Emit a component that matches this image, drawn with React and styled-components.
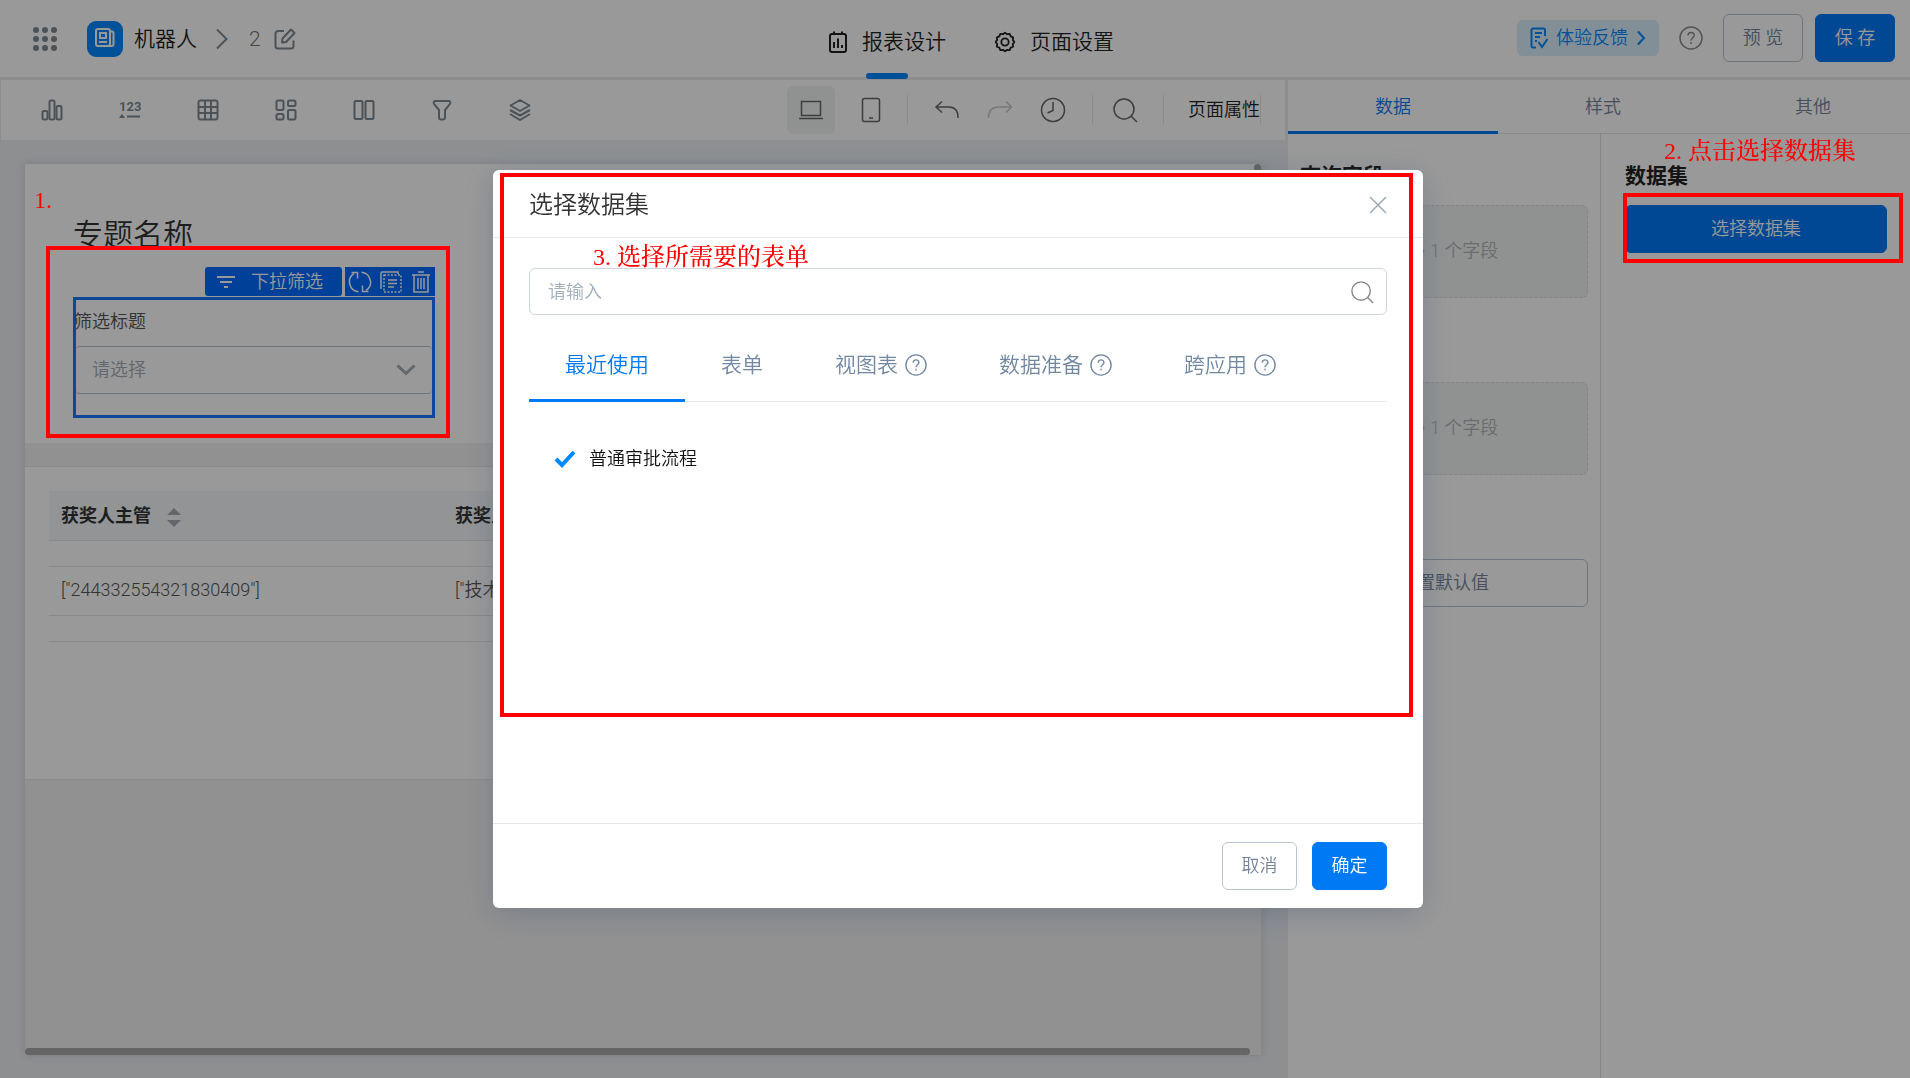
import styled, { createGlobalStyle } from "styled-components";

const App = () => {
  return (
    <>
      <GlobalStyle />
      <Page>
        <Header>
          <HeaderLeft>
            <IconButton aria-label="应用列表">
              <AppsIcon />
            </IconButton>
            <Logo>
              <NewsIcon />
            </Logo>
            <AppName href="#app">机器人</AppName>
            <ChevronRightIcon />
            <PageName>2</PageName>
            <IconButton aria-label="编辑名称">
              <EditIcon />
            </IconButton>
          </HeaderLeft>
          <HeaderNav>
            <NavItem href="#design" $active>
              <ReportIcon />
              报表设计
            </NavItem>
            <NavItem href="#settings">
              <GearIcon />
              页面设置
            </NavItem>
          </HeaderNav>
          <HeaderRight>
            <Feedback href="#feedback">
              <FeedbackIcon />
              体验反馈
              <SmallChevronIcon />
            </Feedback>
            <HelpButton aria-label="帮助">
              <HelpIcon size={24} />
            </HelpButton>
            <Actions>
              <Button>预 览</Button>
              <Button $primary>保 存</Button>
            </Actions>
          </HeaderRight>
        </Header>

        <Body>
          <Workspace>
            <Toolbar>
              <Widgets>
                {widgets.map(({ label, Icon }) => (
                  <WidgetButton key={label} aria-label={label}>
                    <Icon />
                  </WidgetButton>
                ))}
              </Widgets>
              <Tools>
                <ToolButton aria-label="电脑端" $active>
                  <LaptopIcon />
                </ToolButton>
                <ToolButton aria-label="手机端">
                  <PhoneIcon />
                </ToolButton>
                <Divider />
                <History>
                  <IconButton aria-label="撤销">
                    <UndoIcon />
                  </IconButton>
                  <IconButton aria-label="重做" disabled>
                    <RedoIcon />
                  </IconButton>
                  <IconButton aria-label="历史">
                    <ClockIcon />
                  </IconButton>
                </History>
                <Divider />
                <SearchButton aria-label="搜索">
                  <SearchIcon size={26} />
                </SearchButton>
                <Divider />
                <PageProps>页面属性</PageProps>
                <Divider />
              </Tools>
            </Toolbar>

            <Canvas>
              <Paper>
                <FilterSection>
                  <PaperTitle>专题名称</PaperTitle>
                  <Selected>
                    <SelectedBar>
                      <SelectedTag>
                        <FilterLinesIcon />
                        下拉筛选
                      </SelectedTag>
                      <SelectedTools>
                        <IconButton aria-label="切换">
                          <RefreshIcon />
                        </IconButton>
                        <IconButton aria-label="复制">
                          <CopyIcon />
                        </IconButton>
                        <IconButton aria-label="删除">
                          <TrashIcon />
                        </IconButton>
                      </SelectedTools>
                    </SelectedBar>
                    <FilterBox>
                      <FilterLabel htmlFor="filter">筛选标题</FilterLabel>
                      <SelectWrap>
                        <Select id="filter">
                          <option>请选择</option>
                        </Select>
                        <ChevronDownIcon />
                      </SelectWrap>
                    </FilterBox>
                  </Selected>
                </FilterSection>
                <TableSection>
                  <Table>
                    <colgroup>
                      <col width="394" />
                      <col width="394" />
                      <col />
                    </colgroup>
                    <thead>
                      <tr>
                        <Th>
                          获奖人主管
                          <SortIcon />
                        </Th>
                        <Th>获奖人部门</Th>
                        <Th />
                      </tr>
                    </thead>
                    <tbody>
                      <SpacerRow>
                        <td colSpan={3} />
                      </SpacerRow>
                      <tr>
                        <Td>["244332554321830409"]</Td>
                        <Td>["技术部"]</Td>
                        <Td />
                      </tr>
                      <SpacerRow>
                        <td colSpan={3} />
                      </SpacerRow>
                    </tbody>
                  </Table>
                </TableSection>
                <ScrollThumbY />
                <ScrollTrackX>
                  <ScrollThumbX />
                </ScrollTrackX>
              </Paper>
            </Canvas>
          </Workspace>

          <SidePanel>
            <PanelTabs>
              <PanelTab $active>数据</PanelTab>
              <PanelTab>样式</PanelTab>
              <PanelTab>其他</PanelTab>
            </PanelTabs>
            <PanelColumns>
              <FieldColumn>
                <PanelTitle>查询字段</PanelTitle>
                <DropZone>最多 1 个字段</DropZone>
                <PanelTitle $spaced>显示字段</PanelTitle>
                <DropZone>最多 1 个字段</DropZone>
                <PanelTitle $spaced>默认值</PanelTitle>
                <Button>设置默认值</Button>
              </FieldColumn>
              <DatasetColumn>
                <PanelTitle>数据集</PanelTitle>
                <Button $primary>选择数据集</Button>
              </DatasetColumn>
            </PanelColumns>
          </SidePanel>
        </Body>
      </Page>

      <Overlay>
        <Dialog role="dialog" aria-labelledby="dialog-title">
          <DialogHeader>
            <DialogTitle id="dialog-title">选择数据集</DialogTitle>
            <IconButton aria-label="关闭">
              <CloseIcon />
            </IconButton>
          </DialogHeader>
          <DialogBody>
            <SearchBox>
              <SearchInput placeholder="请输入" aria-label="搜索数据集" />
              <SearchIcon size={24} />
            </SearchBox>
            <DialogTabs>
              {tabs.map((tab, i) => (
                <DialogTab key={tab.name} $active={i === 0}>
                  {tab.name}
                  {tab.help && <HelpIcon size={22} />}
                </DialogTab>
              ))}
            </DialogTabs>
            <FormItem>
              <CheckIcon />
              普通审批流程
            </FormItem>
          </DialogBody>
          <DialogFooter>
            <Button $small>取消</Button>
            <Button $small $primary>
              确定
            </Button>
          </DialogFooter>
          <DialogMark />
          <DialogNote>3. 选择所需要的表单</DialogNote>
        </Dialog>
        <FilterMark />
        <FilterNote>1.</FilterNote>
        <DatasetMark />
        <DatasetNote>2. 点击选择数据集</DatasetNote>
      </Overlay>
    </>
  );
};

// icons

const Svg = ({ w = 24, h = w, box, children, sw = 1.5, ...rest }) => (
  <svg
    width={w}
    height={h}
    viewBox={box || `0 0 ${w} ${h}`}
    fill="none"
    stroke="currentColor"
    strokeWidth={sw}
    aria-hidden="true"
    {...rest}
  >
    {children}
  </svg>
);

const AppsIcon = () => (
  <Svg w={26} fill="currentColor" stroke="none">
    {[4, 13, 22].map((y) =>
      [4, 13, 22].map((x) => <circle key={`${x}-${y}`} cx={x} cy={y} r="3" />)
    )}
  </Svg>
);

const NewsIcon = () => (
  <Svg w={22} sw={2}>
    <rect x="2" y="1" width="14" height="17" rx="2" />
    <path d="M16 3.500h2a1.500 1.500 0 0 1 1.500 1.500v11a2 2 0 0 1-2 2H14" />
    <rect x="6" y="5" width="6" height="5" />
    <path d="M5 14h8" />
  </Svg>
);

const ChevronRightIcon = () => (
  <Svg w={14} h={22} sw={2}>
    <path d="M2 1.500 11.500 11 2 20.500" />
  </Svg>
);

const EditIcon = () => (
  <Svg w={22} sw={2}>
    <path d="M10 3H4a2.500 2.500 0 0 0-2.500 2.500V18A2.500 2.500 0 0 0 4 20.500h13a2.500 2.500 0 0 0 2.500-2.500v-5.500" />
    <path d="m17 1.500 3.500 3.500-8.500 9-4 .5.5-4z" strokeLinejoin="round" />
  </Svg>
);

const ReportIcon = () => (
  <Svg w={20} h={24} sw={2}>
    <rect x="2" y="4" width="16" height="18" rx="2" />
    <path d="M6 1.500V5M14 1.500V5" />
    <path d="M6 12v6M10 8.500V18M14 15v3" />
  </Svg>
);

const GearIcon = () => (
  <Svg w={22} box="0 0 24 24" sw={2} strokeLinejoin="round">
    <path d="M9.700 3.500 12 1.800l2.300 1.700 2.800-.4 1.100 2.700 2.700 1.100-.4 2.800L22.200 12l-1.700 2.300.4 2.800-2.700 1.100-1.100 2.700-2.800-.4L12 22.200l-2.300-1.700-2.800.4-1.100-2.700-2.700-1.100.4-2.800L1.800 12l1.700-2.300-.4-2.800 2.700-1.100 1.100-2.700z" />
    <circle cx="12" cy="12" r="4" />
  </Svg>
);

const FeedbackIcon = () => (
  <Svg w={18} h={22} sw={2}>
    <path d="M6 20.500H3A1.500 1.500 0 0 1 1.500 19V3A1.500 1.500 0 0 1 3 1.500h10.500A1.500 1.500 0 0 1 15 3v6" />
    <path d="M5 6h7M5 10h5M5 14h2M8.500 15l3.500 5 5.500-8" />
  </Svg>
);

const SmallChevronIcon = () => (
  <Svg w={10} h={16} sw={2}>
    <path d="m2 1.500 6 6.500-6 6.500" />
  </Svg>
);

const HelpIcon = ({ size }) => (
  <Svg w={size} box="0 0 24 24">
    <circle cx="12" cy="12" r="11" />
    <path d="M9 9.500c0-4 6.200-4 6.200-.2 0 2.400-3.200 2.500-3.200 5.200M12 16v2" />
  </Svg>
);

const BarsIcon = () => (
  <Svg w={22} h={22} sw={2}>
    <rect x="1.500" y="12" width="5" height="8.500" rx="1.500" />
    <rect x="8.500" y="1.500" width="5" height="19" rx="1.500" />
    <rect x="15.500" y="7" width="5" height="13.500" rx="1.500" />
  </Svg>
);

const NumberIcon = () => (
  <Svg w={24} h={20} stroke="none" fill="currentColor">
    <text x="1" y="11" fontSize="13" fontWeight="700" fontFamily="Roboto">
      123
    </text>
    <path d="m1 18 3-4 3 4zM9 15.500h13v2H9z" />
  </Svg>
);

const GridIcon = () => (
  <Svg w={22} sw={2}>
    <rect x="1.500" y="1.500" width="19" height="19" rx="2" />
    <path d="M8 2v18M14 2v18M2 8h18M2 14h18" />
  </Svg>
);

const BlocksIcon = () => (
  <Svg w={22} sw={2}>
    <rect x="1.500" y="1.500" width="7" height="9.500" rx="1.500" />
    <rect x="13" y="1.500" width="7.500" height="5.500" rx="1.500" />
    <rect x="1.500" y="15" width="7" height="5.500" rx="1.500" />
    <rect x="13" y="11" width="7.500" height="9.500" rx="1.500" />
  </Svg>
);

const ColumnsIcon = () => (
  <Svg w={22} sw={2}>
    <rect x="1.500" y="2" width="8" height="18" rx="1.500" />
    <rect x="12.500" y="2" width="8" height="18" rx="1.500" />
  </Svg>
);

const FunnelIcon = () => (
  <Svg w={20} h={22} sw={2} strokeLinejoin="round">
    <path d="M3 2h14c1.500 0 1.500 2 1 2.800L13 11v7.500c0 1-1 2-2 2H9c-1 0-2-1-2-2V11L2 4.800C1.500 4 1.500 2 3 2z" />
  </Svg>
);

const LayersIcon = () => (
  <Svg w={24} sw={2} strokeLinejoin="round">
    <path d="m12 2 9.500 5.500L12 13 2.500 7.500zM2 12l10 5.500L22 12M2 16l10 6 10-6" />
  </Svg>
);

const LaptopIcon = () => (
  <Svg w={26} h={22}>
    <path d="M3.500 2.500h19v14h-19zM1 19.500h24" />
  </Svg>
);

const PhoneIcon = () => (
  <Svg w={20} h={26}>
    <rect x="1.500" y="1.500" width="17" height="23" rx="2" />
    <path d="M8 21h4" />
  </Svg>
);

const UndoIcon = () => (
  <Svg w={26} h={20}>
    <path d="M8 1.500 2 7l6 5.500M2 7h13c6 0 9 4 9 11" />
  </Svg>
);

const RedoIcon = () => (
  <Svg w={26} h={20}>
    <path d="m19 1.500 5.500 5.500-5.500 5.500M24.500 7h-13C5 7 1.500 11 1.500 18" />
  </Svg>
);

const ClockIcon = () => (
  <Svg w={26}>
    <circle cx="13" cy="13" r="11.500" />
    <path d="M13 5v8.500L7.500 16" />
  </Svg>
);

const SearchIcon = ({ size }) => (
  <Svg w={size} box="0 0 26 26">
    <circle cx="12" cy="12" r="10" />
    <path d="m19 19 6 6" />
  </Svg>
);

const FilterLinesIcon = () => (
  <Svg w={18} h={16} sw={2}>
    <path d="M0 3h18M3 8h12M7 13h4" />
  </Svg>
);

const RefreshIcon = () => (
  <Svg w={24}>
    <path d="M10.500 21.800A10 10 0 0 1 6 3.500M13.500 2.200A10 10 0 0 1 18 20.500" />
    <path d="M3.500 2.500h6v6M20.500 21.500h-6v-6" />
  </Svg>
);

const CopyIcon = () => (
  <Svg w={24}>
    <path d="M2 19V3a1 1 0 0 1 1-1h16v2" />
    <rect x="5" y="5" width="17" height="17" strokeDasharray="2 1.500" />
    <path d="M9 10h9M9 13.500h9M9 17h6" />
  </Svg>
);

const TrashIcon = () => (
  <Svg w={22} h={24}>
    <path d="M2 5h18M8 2h6M4 5v17h14V5M8 8v11M11 8v11M14 8v11" />
  </Svg>
);

const ChevronDownIcon = () => (
  <Svg w={20} h={12} sw={3}>
    <path d="m1.500 1.500 8.500 8 8.500-8" />
  </Svg>
);

const SortIcon = () => (
  <Svg w={14} h={20} fill="#a3acb8" stroke="none">
    <path d="m0 7 7-7 7 7zM0 12l7 7 7-7z" />
  </Svg>
);

const CloseIcon = () => (
  <Svg w={18}>
    <path d="m1 1 16 16M17 1 1 17" />
  </Svg>
);

const CheckIcon = () => (
  <Svg w={22} h={18} sw={4}>
    <path d="m2 9 6 6L20 2" />
  </Svg>
);

const widgets = [
  { label: "图表", Icon: BarsIcon },
  { label: "指标", Icon: NumberIcon },
  { label: "表格", Icon: GridIcon },
  { label: "组件", Icon: BlocksIcon },
  { label: "布局", Icon: ColumnsIcon },
  { label: "筛选", Icon: FunnelIcon },
  { label: "图层", Icon: LayersIcon },
];

const tabs = [
  { name: "最近使用" },
  { name: "表单" },
  { name: "视图表", help: true },
  { name: "数据准备", help: true },
  { name: "跨应用", help: true },
];

// styles

const GlobalStyle = createGlobalStyle`
  * {
    box-sizing: border-box;
  }
  body {
    margin: 0;
    overflow: hidden;
    font-family: Roboto, "Noto Sans CJK SC", sans-serif;
    font-size: 18px;
    font-weight: 350;
    line-height: 24px;
    color: #333;
  }
  button, input, select {
    font: inherit;
    color: inherit;
  }
  button {
    padding: 0;
    border: none;
    background: none;
    cursor: pointer;
  }
  a {
    color: inherit;
    text-decoration: none;
  }
  svg {
    flex: none;
    display: block;
  }
`;

const Page = styled.div`
  height: 100vh;
  display: flex;
  flex-direction: column;
  background-color: #fff;
`;

const IconButton = styled.button`
  display: flex;
  align-items: center;
  &:disabled {
    opacity: 0.35;
  }
`;

const Button = styled.button`
  min-width: ${(props) => (props.$small ? "75px" : "80px")};
  height: 48px;
  border-radius: 6px;
  border: 1px solid ${(props) => (props.$primary ? "#0079f5" : "#b9c3cf")};
  background-color: ${(props) => (props.$primary ? "#0079f5" : "#fff")};
  color: ${(props) => (props.$primary ? "#fff" : "#75849a")};
`;

const Header = styled.header`
  display: grid;
  grid-template-columns: 1fr auto 1fr;
  height: 80px;
  flex: none;
  padding-left: 32px;
  border-bottom: 3px solid #ececee;
`;

const HeaderLeft = styled.div`
  display: flex;
  align-items: center;
  color: #7f8a93;
`;

const Logo = styled.div`
  display: flex;
  align-items: center;
  justify-content: center;
  width: 36px;
  height: 36px;
  margin: 0 11px 0 29px;
  border-radius: 9px;
  background-color: #0088fe;
  color: #fff;
`;

const AppName = styled.a`
  margin-right: 18px;
  font-size: 21px;
  color: #222;
`;

const PageName = styled.span`
  margin: 0 13px 0 20px;
  font-size: 21px;
  color: #777;
`;

const HeaderNav = styled.nav`
  display: flex;
  gap: 48px;
`;

const NavItem = styled.a`
  position: relative;
  display: flex;
  align-items: center;
  gap: 14px;
  padding-top: 6px;
  font-size: 21px;
  color: #222;
  &::after {
    content: "";
    display: ${(props) => (props.$active ? "block" : "none")};
    position: absolute;
    bottom: -2px;
    left: calc(50% - 21px);
    width: 42px;
    height: 6px;
    border-radius: 3px;
    background-color: #0088fe;
  }
`;

const HeaderRight = styled.div`
  display: flex;
  align-items: center;
  justify-content: flex-end;
  padding-right: 15px;
  padding-bottom: 2px;
`;

const Feedback = styled.a`
  display: flex;
  align-items: center;
  gap: 8px;
  height: 36px;
  padding: 0 13px;
  border-radius: 6px;
  background-color: #daeefc;
  color: #0088fe;
`;

const HelpButton = styled(IconButton)`
  margin: 0 20px;
  color: #8c8c8c;
`;

const Actions = styled.div`
  display: flex;
  gap: 12px;
`;

const Body = styled.div`
  flex: 1;
  display: flex;
  min-height: 0;
`;

const Workspace = styled.main`
  flex: 1;
  display: flex;
  flex-direction: column;
  min-width: 0;
`;

const Toolbar = styled.div`
  display: flex;
  align-items: center;
  justify-content: space-between;
  height: 60px;
  padding-left: 12px;
  padding-right: 24px;
  border-left: 1px solid #ececee;
  border-right: 3px solid #ececee;
`;

const Widgets = styled.div`
  display: flex;
`;

const WidgetButton = styled.button`
  display: flex;
  justify-content: center;
  align-items: center;
  width: 78px;
  height: 48px;
  color: #7f8a93;
`;

const Tools = styled.div`
  display: flex;
  align-items: center;
  color: #666;
`;

const ToolButton = styled.button`
  display: flex;
  justify-content: center;
  align-items: center;
  width: 48px;
  height: 48px;
  margin-right: 12px;
  border-radius: 6px;
  background-color: ${(props) => (props.$active ? "#f1f4f4" : "transparent")};
`;

const Divider = styled.div`
  width: 1px;
  height: 30px;
  background-color: #e4e6ea;
`;

const History = styled.div`
  display: flex;
  align-items: center;
  gap: 27px;
  padding: 0 26px;
`;

const SearchButton = styled(IconButton)`
  padding: 0 25px 0 19px;
`;

const PageProps = styled.button`
  padding-left: 24px;
  color: #222;
`;

const Canvas = styled.div`
  flex: 1;
  padding: 24px 27px 23px 25px;
  background-color: #ebeef2;
  min-height: 0;
`;

const Paper = styled.div`
  position: relative;
  display: flex;
  flex-direction: column;
  gap: 23px;
  height: 100%;
  background-color: #f2f2f2;
  box-shadow: 0 0 8px rgba(40, 50, 90, 0.15);
`;

const FilterSection = styled.section`
  height: 279px;
  padding: 49px 48px;
  background-color: #fff;
`;

const PaperTitle = styled.h1`
  margin: 0 0 10px;
  font-size: 30px;
  font-weight: 350;
  line-height: 44px;
`;

const Selected = styled.div`
  width: 362px;
`;

const SelectedBar = styled.div`
  display: flex;
  justify-content: flex-end;
  gap: 3px;
  padding-bottom: 1px;
  color: #fff;
`;

const SelectedTag = styled.div`
  display: flex;
  align-items: center;
  gap: 16px;
  width: 137px;
  height: 29px;
  padding-left: 12px;
  border-radius: 3px;
  background-color: #006bff;
`;

const SelectedTools = styled.div`
  display: flex;
  align-items: center;
  justify-content: space-around;
  width: 90px;
  height: 29px;
  background-color: #006bff;
`;

const FilterBox = styled.div`
  height: 121px;
  border: 3px solid #1a75ff;
`;

const FilterLabel = styled.label`
  display: block;
  margin-left: -2px;
  padding: 10px 0 12px;
  color: #555;
`;

const SelectWrap = styled.div`
  display: flex;
  align-items: center;
  height: 48px;
  padding-right: 16px;
  border: 1px solid #b9c3cf;
  border-width: 1px 0;
  border-radius: 4px;
  color: #a3abb6;
`;

const Select = styled.select`
  flex: 1;
  height: 46px;
  padding: 0 16px;
  border: none;
  background: none;
  appearance: none;
`;

const TableSection = styled.section`
  height: 314px;
  padding: 24px;
  border: 1px solid #e4e6ea;
  border-width: 1px 0;
  background-color: #fff;
`;

const Table = styled.table`
  width: 100%;
  table-layout: fixed;
  border-collapse: separate;
  border-spacing: 0;
`;

const Th = styled.th`
  height: 50px;
  padding: 0 12px;
  border-bottom: 1px solid #e4e6ea;
  background-color: #f4f7fa;
  font-weight: 700;
  text-align: left;
  svg {
    display: inline-block;
    margin-left: 16px;
    vertical-align: -6px;
  }
`;

const Td = styled.td`
  height: 49px;
  padding: 0 12px 2px;
  border-bottom: 1px solid #e4e6ea;
  color: #555;
`;

const SpacerRow = styled.tr`
  td {
    height: 26px;
    padding: 0;
    border-bottom: 1px solid #e4e6ea;
  }
`;

const ScrollThumbY = styled.div`
  position: absolute;
  top: 0;
  right: 0;
  width: 7px;
  height: 50%;
  border-radius: 4px;
  background-color: #a8a8a8;
`;

const ScrollTrackX = styled.div`
  margin-top: auto;
  padding-right: 11px;
`;

const ScrollThumbX = styled.div`
  height: 7px;
  border-radius: 4px;
  background-color: #a8a8a8;
`;

const SidePanel = styled.aside`
  width: 622px;
  display: flex;
  flex-direction: column;
`;

const PanelTabs = styled.div`
  display: flex;
  height: 54px;
  overflow: hidden;
  box-shadow: inset 0 -1px #e4e6ea;
`;

const PanelTab = styled.button`
  flex: 0 0 210px;
  padding-top: 2px;
  border-bottom: 3px solid ${(props) => (props.$active ? "#0079f5" : "transparent")};
  color: ${(props) => (props.$active ? "#0079f5" : "#75849a")};
`;

const PanelColumns = styled.div`
  flex: 1;
  display: flex;
`;

const FieldColumn = styled.div`
  display: flex;
  flex-direction: column;
  flex: none;
  width: 313px;
  padding: 27px 12px;
  border-right: 1px solid #dcdee2;
`;

const DatasetColumn = styled.div`
  display: flex;
  flex-direction: column;
  flex: 1;
  padding: 27px 23px 27px 24px;
`;

const PanelTitle = styled.h2`
  margin: ${(props) => (props.$spaced ? "40px 0 14px" : "0 0 14px")};
  font-size: 21px;
  font-weight: 700;
  line-height: 30px;
  color: #222;
`;

const DropZone = styled.div`
  display: flex;
  align-items: center;
  justify-content: center;
  height: 93px;
  padding-bottom: 2px;
  border: 1px dashed #dcdfdf;
  border-radius: 6px;
  background-color: #f1f4f4;
  color: #b0b3b5;
`;

const Overlay = styled.div`
  position: fixed;
  inset: 0;
  display: flex;
  justify-content: center;
  align-items: center;
  padding-left: 6px;
  background-color: rgba(0, 0, 0, 0.4);
`;

const Dialog = styled.div`
  position: relative;
  display: flex;
  flex-direction: column;
  width: 930px;
  max-width: 100%;
  height: 738px;
  border-radius: 6px;
  background-color: #fff;
  box-shadow: 0 6px 30px rgba(60, 75, 110, 0.3);
`;

const DialogHeader = styled.div`
  display: flex;
  align-items: center;
  justify-content: space-between;
  height: 68px;
  padding: 2px 36px 0;
  border-bottom: 1px solid #e6e9ec;
  color: #9aa8b8;
`;

const DialogTitle = styled.h2`
  margin: 0;
  font-size: 24px;
  font-weight: 350;
  color: #333;
`;

const DialogBody = styled.div`
  flex: 1;
  padding: 30px 36px;
`;

const SearchBox = styled.div`
  display: flex;
  align-items: center;
  height: 47px;
  padding-right: 12px;
  border: 1px solid #cfd6de;
  border-radius: 6px;
  color: #888;
`;

const SearchInput = styled.input`
  flex: 1;
  height: 100%;
  padding: 0 18px;
  border: none;
  outline: none;
  background: none;
  &::placeholder {
    color: #a3afbd;
  }
`;

const DialogTabs = styled.div`
  display: flex;
  height: 87px;
  padding-top: 15px;
  box-shadow: inset 0 -1px #e6e9ec;
`;

const DialogTab = styled.button`
  display: flex;
  align-items: center;
  gap: 7px;
  padding: 0 36px;
  font-size: 21px;
  border-bottom: 3px solid ${(props) => (props.$active ? "#0079f5" : "transparent")};
  color: ${(props) => (props.$active ? "#0079f5" : "#7187a2")};
`;

const FormItem = styled.button`
  display: flex;
  align-items: center;
  gap: 13px;
  margin-top: 45px;
  padding-left: 25px;
  color: #111;
  svg {
    color: #0088fe;
  }
`;

const DialogFooter = styled.div`
  display: flex;
  align-items: center;
  justify-content: flex-end;
  gap: 15px;
  height: 85px;
  padding: 0 36px;
  border-top: 1px solid #e6e9ec;
`;

// red marks and notes lying over the page
const Mark = styled.div`
  position: absolute;
  border: 4px solid #ff0000;
  pointer-events: none;
`;

const Note = styled.p`
  position: absolute;
  margin: 0;
  font-family: "Liberation Serif", "Noto Serif CJK SC", "Noto Sans CJK SC", serif;
  font-size: 24px;
  font-weight: 500;
  line-height: 30px;
  color: #ff0000;
`;

const DialogMark = styled(Mark)`
  top: 3px;
  left: 7px;
  right: 10px;
  height: 544px;
`;

const DialogNote = styled(Note)`
  top: 72px;
  left: 100px;
`;

const FilterMark = styled(Mark)`
  top: 246px;
  left: 46px;
  width: 404px;
  height: 192px;
`;

const FilterNote = styled(Note)`
  top: 185px;
  left: 34px;
`;

const DatasetMark = styled(Mark)`
  top: 193px;
  right: 7px;
  width: 280px;
  height: 70px;
`;

const DatasetNote = styled(Note)`
  top: 136px;
  right: 54px;
`;

export default App;
